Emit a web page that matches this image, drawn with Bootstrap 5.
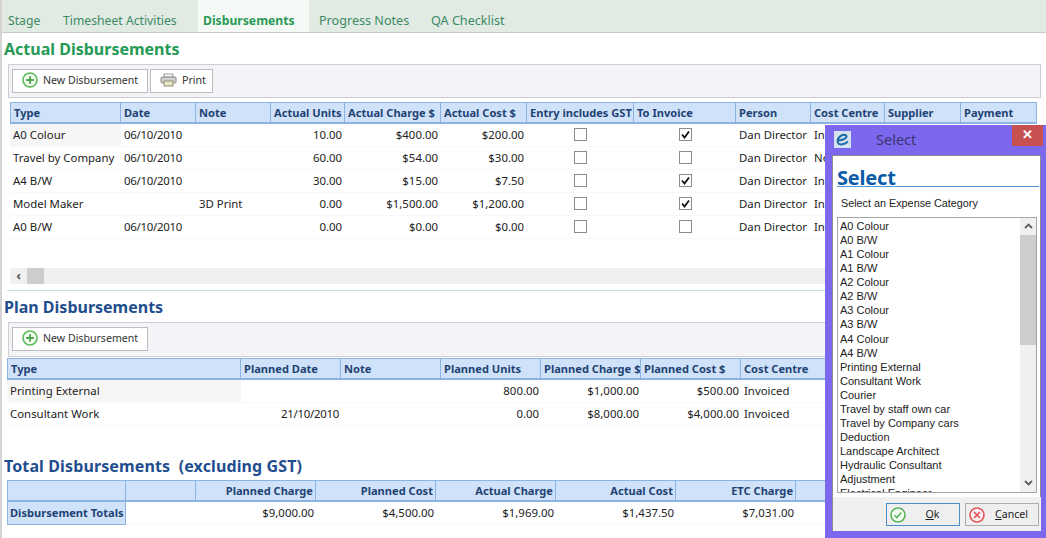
<!DOCTYPE html>
<html lang="en">
<head>
<meta charset="utf-8">
<title>Disbursements</title>
<link href="https://cdn.jsdelivr.net/npm/bootstrap@5.3.0/dist/css/bootstrap.min.css" rel="stylesheet">
<style>
html,body{height:538px;overflow:hidden}
body{font:12px/16px "Noto Sans",sans-serif;color:#222;background:#fff;position:relative}
.shell{width:1046px;height:538px;border-left:2px solid #d4d4d4;overflow:hidden}
.tabbar{height:33px;background:#e1ebe4;border-bottom:1px solid #c6cbc8;margin-left:-2px;padding-left:2px}
.tabitem{padding:0 6px;height:32px;line-height:41px;color:#3c8a63;font-size:12.2px;white-space:nowrap}
.tabitem.first{width:55px}
.tabitem.second{width:141px}
.tabitem.on{background:#f4f9f6;font-weight:700;color:#2a9a57;width:111px;padding-left:5px}
.tabitem.fourth{width:116px;padding-left:10px;font-size:12.6px}
.tabitem.fifth{font-size:12.6px}
.sect-title{font-size:16px;font-weight:700;line-height:22px;margin:0;padding-left:2px;white-space:pre}
.tgreen{color:#269a55;margin-top:5px}
.tblue{color:#1f4e8f}
.ttotal{letter-spacing:.12px}
.toolstrip{margin:4px 5px 0 6px;height:34px;background:#f3f3f8;border:1px solid #cdcdd2;padding:4px 3px;gap:2px}
.toolstrip.alt{height:35px}
.toolbtn{height:24px;padding:0 5px 2px 9px;background:#fff;border:1px solid #bdbdbd;color:#333;font-size:10.6px;line-height:20px;gap:5px;white-space:nowrap}
.w-new{width:136px}
.w-print{width:63px}
.table.grid{table-layout:fixed;border-collapse:separate;border-spacing:0;font-size:11.4px}
.table.grid>*>*>*{padding:0 3px;height:23px;border:0;background:transparent;color:#222;white-space:nowrap;overflow:hidden;vertical-align:middle;box-shadow:none;line-height:16px}
.table.grid>thead>tr>th{height:22px;background:#cfe2f9;color:#1f4273;font-weight:700;font-size:11.1px;border-top:1px solid #8cb4e2;border-bottom:2px solid #8cb4e2;border-right:1px solid #8cb4e2}
.table.grid>thead>tr>th:first-child{border-left:1px solid #8cb4e2}
.table.grid>tbody>tr>td{border-bottom:1px solid #f7f8fb}
.table.grid .num{text-align:right}
.table.grid .ctr{text-align:center}
.table.grid .dt{letter-spacing:-.25px}
.table.grid>tbody>tr>td.sel{background:#f6f6f6}
.table.grid-b>*>*>.num,.table.grid-c>*>*>.num{padding-right:2px}
.table.grid-a{margin:4px 0 0 8px;width:1027px}
.grid-a col:nth-child(1){width:111px}.grid-a col:nth-child(2){width:75px}.grid-a col:nth-child(3){width:75px}.grid-a col:nth-child(4){width:74px}.grid-a col:nth-child(5){width:96px}.grid-a col:nth-child(6){width:86px}.grid-a col:nth-child(7){width:107px}.grid-a col:nth-child(8){width:102px}.grid-a col:nth-child(9){width:75px}.grid-a col:nth-child(10){width:74px}.grid-a col:nth-child(11){width:76px}.grid-a col:nth-child(12){width:76px}
.cbx{width:13px;height:13px;border:1px solid #8c8c8c;background:#fff;display:inline-block;vertical-align:middle;position:relative;top:-1px}
.cbx svg{display:block;width:11px;height:11px}
.gap-a{height:29px}
.hscroll{margin-left:8px;width:1027px;height:16px;background:#f0f0f0;gap:0}
.hscroll .arrow{width:17px;color:#555;font-size:13px;font-weight:700;line-height:15px;text-align:center}
.hscroll .thumb{width:17px;background:#cdcdcd}
.rule-green{height:1px;background:#bfe5cf;margin:6px 0 5px 5px}
.table.grid-b{margin:1px 0 0 5px;width:819px}
.grid-b col:nth-child(1){width:234px}.grid-b col:nth-child(2){width:100px}.grid-b col:nth-child(3){width:100px}.grid-b col:nth-child(4){width:100px}.grid-b col:nth-child(5){width:100px}.grid-b col:nth-child(6){width:100px}.grid-b col:nth-child(7){width:85px}
.table.grid-c{margin:3px 0 0 5px;width:909px}
.grid-c col:nth-child(1){width:119px}.grid-c col:nth-child(2){width:70px}.grid-c col:nth-child(n+3){width:120px}
.table.grid>tbody>tr>th{background:#cfe2f9;color:#1f4273;font-weight:700;font-size:11.1px;border:1px solid #8cb4e2;border-top:0;padding-left:2px}
.gap-b{height:29px}
.dlg{position:absolute;left:825px;top:125px;width:221px;height:413px;background:#7b68ee;font-family:"Liberation Sans",sans-serif}
.dlg-head{height:30px;padding-left:9px}
.dlg-logo{width:17px;height:17px;background:#d5e3ef;margin-top:-1px}
.dlg-name{margin:-2px 0 0 25px;font-size:14.5px;color:#3b3470;font-family:"Noto Sans",sans-serif}
.dlg-close{position:absolute;right:3px;top:0;width:31px;height:21px;background:#c75050;color:#fff;text-align:center;line-height:19px;font-size:13px;font-weight:700}
.dlg-body{margin:0 5px 0 7px;height:376px;background:#fff;border:1px solid #8d8d8d;padding:0 4px}
.dlg-title{font:700 20px/28px "Noto Sans",sans-serif;color:#0a5ba8;border-bottom:1px solid #4f97d8;margin:8px -3px 0 0;height:23px;letter-spacing:-.2px}
.dlg-label{font-size:10.8px;margin-top:8px;padding-left:4px;line-height:16px;color:#222}
.lbox{height:276px;width:200px;margin-top:6px;border:1px solid #a5a5a5;overflow:hidden}
.lbox-items{flex:1;padding:1px 0 0 2px;font-size:11px;line-height:14.07px;overflow:hidden;color:#222;white-space:nowrap}
.lbox-bar{width:16px;background:#f0f0f0}
.lbox-arrow{height:17px}
.lbox-arrow svg{display:block;margin:5px auto 0}
.lbox-thumb{height:110px;background:#cdcdcd}
.dlg-foot{margin:-34px 5px 0 8px;height:34px;background:#f0f0f0;position:relative;padding:6px 2px 0 0;gap:5px}
.dbtn{height:23px;width:74px;background:#efefef;border:1px solid #adadad;font:10.6px/21px "Noto Sans",sans-serif;color:#222;padding:0 0 0 3px}
.dbtn.primary{border-color:#4a8fc9}
.dbtn u{text-decoration:underline}
.dbtn span{flex:1;text-align:center}
</style>
</head>
<body>
<div class="shell">
  <div class="tabbar d-flex">
    <div class="tabitem first">Stage</div>
    <div class="tabitem second">Timesheet Activities</div>
    <div class="tabitem on">Disbursements</div>
    <div class="tabitem fourth">Progress Notes</div>
    <div class="tabitem fifth">QA Checklist</div>
  </div>
  <h2 class="sect-title tgreen">Actual Disbursements</h2>
  <div class="toolstrip d-flex">
    <div class="toolbtn w-new d-flex align-items-center">
      <svg width="16" height="16" viewBox="0 0 16 16"><circle cx="8" cy="8" r="7" fill="#f1fbef" stroke="#5cb85c" stroke-width="1.6"/><path d="M8 4.2v7.6M4.2 8h7.6" stroke="#4aa84a" stroke-width="1.8"/></svg>
      <span>New Disbursement</span>
    </div>
    <div class="toolbtn w-print d-flex align-items-center">
      <svg width="17" height="14" viewBox="0 0 17 14"><rect x="4" y="1" width="9" height="3" fill="#fff" stroke="#9a9a9a"/><rect x="1" y="4" width="15" height="6" rx="1" fill="#cfcfcf" stroke="#8d8d8d"/><rect x="4" y="8" width="9" height="5" fill="#e9e6c8" stroke="#8f8f70"/></svg>
      <span>Print</span>
    </div>
  </div>
  <table class="table grid grid-a">
    <colgroup><col><col><col><col><col><col><col><col><col><col><col><col></colgroup>
    <thead><tr><th>Type</th><th>Date</th><th>Note</th><th>Actual Units</th><th>Actual Charge $</th><th>Actual Cost $</th><th>Entry includes GST</th><th>To Invoice</th><th>Person</th><th>Cost Centre</th><th>Supplier</th><th>Payment</th></tr></thead>
    <tbody>
      <tr><td class="sel">A0 Colour</td><td class="dt">06/10/2010</td><td></td><td class="num">10.00</td><td class="num">$400.00</td><td class="num">$200.00</td><td class="ctr"><span class="cbx"></span></td><td class="ctr"><span class="cbx"><svg viewBox="0 0 11 11"><path d="M2 5.5l2.5 3L9 2.5" fill="none" stroke="#111" stroke-width="1.8"/></svg></span></td><td>Dan Director</td><td>Invoiced</td><td></td><td></td></tr>
      <tr><td>Travel by Company</td><td class="dt">06/10/2010</td><td></td><td class="num">60.00</td><td class="num">$54.00</td><td class="num">$30.00</td><td class="ctr"><span class="cbx"></span></td><td class="ctr"><span class="cbx"></span></td><td>Dan Director</td><td>Not Invoiced</td><td></td><td></td></tr>
      <tr><td>A4 B/W</td><td class="dt">06/10/2010</td><td></td><td class="num">30.00</td><td class="num">$15.00</td><td class="num">$7.50</td><td class="ctr"><span class="cbx"></span></td><td class="ctr"><span class="cbx"><svg viewBox="0 0 11 11"><path d="M2 5.5l2.5 3L9 2.5" fill="none" stroke="#111" stroke-width="1.8"/></svg></span></td><td>Dan Director</td><td>Invoiced</td><td></td><td></td></tr>
      <tr><td>Model Maker</td><td></td><td>3D Print</td><td class="num">0.00</td><td class="num">$1,500.00</td><td class="num">$1,200.00</td><td class="ctr"><span class="cbx"></span></td><td class="ctr"><span class="cbx"><svg viewBox="0 0 11 11"><path d="M2 5.5l2.5 3L9 2.5" fill="none" stroke="#111" stroke-width="1.8"/></svg></span></td><td>Dan Director</td><td>Invoiced</td><td></td><td></td></tr>
      <tr><td>A0 B/W</td><td class="dt">06/10/2010</td><td></td><td class="num">0.00</td><td class="num">$0.00</td><td class="num">$0.00</td><td class="ctr"><span class="cbx"></span></td><td class="ctr"><span class="cbx"></span></td><td>Dan Director</td><td>Invoiced</td><td></td><td></td></tr>
    </tbody>
  </table>
  <div class="gap-a"></div>
  <div class="hscroll d-flex"><div class="arrow">&#8249;</div><div class="thumb"></div></div>
  <div class="rule-green"></div>
  <h2 class="sect-title tblue">Plan Disbursements</h2>
  <div class="toolstrip alt d-flex">
    <div class="toolbtn w-new d-flex align-items-center">
      <svg width="16" height="16" viewBox="0 0 16 16"><circle cx="8" cy="8" r="7" fill="#f1fbef" stroke="#5cb85c" stroke-width="1.6"/><path d="M8 4.2v7.6M4.2 8h7.6" stroke="#4aa84a" stroke-width="1.8"/></svg>
      <span>New Disbursement</span>
    </div>
  </div>
  <table class="table grid grid-b">
    <colgroup><col><col><col><col><col><col><col></colgroup>
    <thead><tr><th>Type</th><th>Planned Date</th><th>Note</th><th>Planned Units</th><th>Planned Charge $</th><th>Planned Cost $</th><th>Cost Centre</th></tr></thead>
    <tbody>
      <tr><td class="sel">Printing External</td><td></td><td></td><td class="num">800.00</td><td class="num">$1,000.00</td><td class="num">$500.00</td><td>Invoiced</td></tr>
      <tr><td>Consultant Work</td><td class="num dt">21/10/2010</td><td></td><td class="num">0.00</td><td class="num">$8,000.00</td><td class="num">$4,000.00</td><td>Invoiced</td></tr>
    </tbody>
  </table>
  <div class="gap-b"></div>
  <h2 class="sect-title tblue ttotal">Total Disbursements  (excluding GST)</h2>
  <table class="table grid grid-c">
    <colgroup><col><col><col><col><col><col><col><col></colgroup>
    <thead><tr><th></th><th></th><th class="num">Planned Charge</th><th class="num">Planned Cost</th><th class="num">Actual Charge</th><th class="num">Actual Cost</th><th class="num">ETC Charge</th><th></th></tr></thead>
    <tbody><tr><th>Disbursement Totals</th><td></td><td class="num">$9,000.00</td><td class="num">$4,500.00</td><td class="num">$1,969.00</td><td class="num">$1,437.50</td><td class="num">$7,031.00</td><td></td></tr></tbody>
  </table>
</div>
<div class="dlg">
  <div class="dlg-head d-flex align-items-center">
    <div class="dlg-logo d-flex align-items-center justify-content-center">
      <svg width="15" height="13" viewBox="0 0 15 13"><path d="M3 7.5C6 7.5 11 6 11.5 3.8 12 2 9 1.2 6.5 2.5 3 4.3 1.5 8 3.2 10.3 5 12.3 9.5 11.5 13 8.5" fill="none" stroke="#1c6aa6" stroke-width="2"/></svg>
    </div>
    <div class="dlg-name">Select</div>
  </div>
  <div class="dlg-close">&#10005;</div>
  <div class="dlg-body">
    <div class="dlg-title">Select</div>
    <div class="dlg-label">Select an Expense Category</div>
    <div class="lbox d-flex">
      <div class="lbox-items">
        <div>A0 Colour</div><div>A0 B/W</div><div>A1 Colour</div><div>A1 B/W</div><div>A2 Colour</div><div>A2 B/W</div><div>A3 Colour</div><div>A3 B/W</div><div>A4 Colour</div><div>A4 B/W</div><div>Printing External</div><div>Consultant Work</div><div>Courier</div><div>Travel by staff own car</div><div>Travel by Company cars</div><div>Deduction</div><div>Landscape Architect</div><div>Hydraulic Consultant</div><div>Adjustment</div><div>Electrical Engineer</div>
      </div>
      <div class="lbox-bar d-flex flex-column">
        <div class="lbox-arrow"><svg width="9" height="6" viewBox="0 0 9 6"><path d="M1 5l3.5-3.5L8 5" fill="none" stroke="#606060" stroke-width="1.8"/></svg></div>
        <div class="lbox-thumb"></div>
        <div class="flex-grow-1"></div>
        <div class="lbox-arrow"><svg width="9" height="6" viewBox="0 0 9 6"><path d="M1 1l3.5 3.5L8 1" fill="none" stroke="#606060" stroke-width="1.8"/></svg></div>
      </div>
    </div>
  </div>
  <div class="dlg-foot d-flex justify-content-end">
    <div class="dbtn primary d-flex align-items-center">
      <svg width="16" height="16" viewBox="0 0 16 16"><circle cx="8" cy="8" r="7" fill="#f4fbf2" stroke="#58b458" stroke-width="1.6"/><path d="M4.5 8.2l2.4 2.4 4.4-5" fill="none" stroke="#58b458" stroke-width="1.5"/></svg>
      <span><u>O</u>k</span>
    </div>
    <div class="dbtn d-flex align-items-center">
      <svg width="16" height="16" viewBox="0 0 16 16"><circle cx="8" cy="8" r="7" fill="#fdf0f0" stroke="#e0555a" stroke-width="1.6"/><path d="M5 5l6 6M11 5l-6 6" stroke="#e0555a" stroke-width="1.7"/></svg>
      <span><u>C</u>ancel</span>
    </div>
  </div>
</div>
<script src="https://cdn.jsdelivr.net/npm/bootstrap@5.3.0/dist/js/bootstrap.bundle.min.js"></script>
</body>
</html>
